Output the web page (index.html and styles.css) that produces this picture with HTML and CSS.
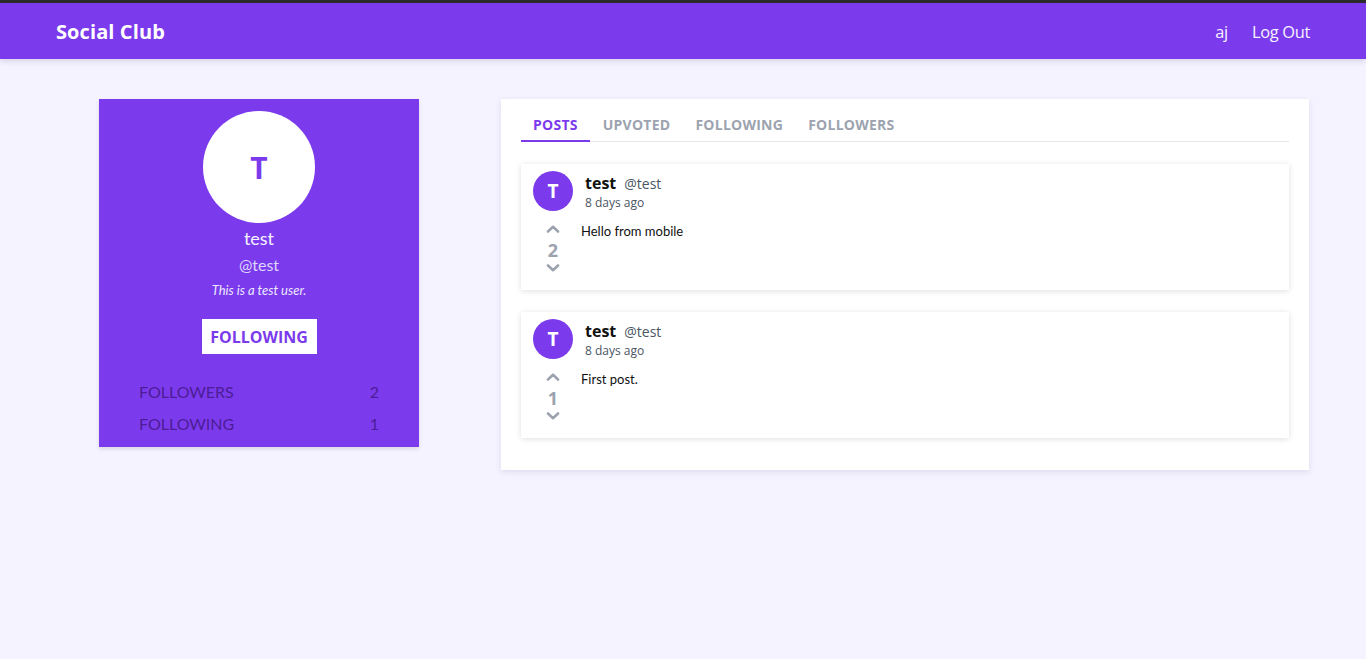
FILE: index.html
```html
<!DOCTYPE html>
<html>
<head>
<meta charset="utf-8">
<link rel="stylesheet" href="styles.css">
</head>
<body>
<header class="topbar">
  <div class="brand">Social Club</div>
  <nav class="nav">
    <a class="nav-link">aj</a>
    <a class="nav-link">Log Out</a>
  </nav>
</header>
<main class="page">
  <aside class="profile">
    <div class="profile-avatar">T</div>
    <div class="profile-name">test</div>
    <div class="profile-handle">@test</div>
    <div class="profile-bio">This is a test user.</div>
    <button class="follow-btn">FOLLOWING</button>
    <div class="stats">
      <div class="stat"><span>FOLLOWERS</span><span>2</span></div>
      <div class="stat"><span>FOLLOWING</span><span>1</span></div>
    </div>
  </aside>
  <section class="feed">
    <div class="tabs">
      <div class="tab active">POSTS</div>
      <div class="tab">UPVOTED</div>
      <div class="tab">FOLLOWING</div>
      <div class="tab">FOLLOWERS</div>
    </div>
    <div class="posts">
      <article class="post">
        <div class="post-head">
          <div class="post-avatar">T</div>
          <div class="post-meta">
            <div class="post-author"><span class="post-name">test</span><span class="post-handle">@test</span></div>
            <div class="post-time">8 days ago</div>
          </div>
        </div>
        <div class="post-body">
          <div class="votes">
            <svg class="chev up" viewBox="0 0 14 8" width="14" height="8"><path d="M2 6.5 L7 1.8 L12 6.5" fill="none" stroke="currentColor" stroke-width="2.6" stroke-linecap="round" stroke-linejoin="round"/></svg>
            <div class="count">2</div>
            <svg class="chev down" viewBox="0 0 14 8" width="14" height="8"><path d="M2 1.5 L7 6.2 L12 1.5" fill="none" stroke="currentColor" stroke-width="2.6" stroke-linecap="round" stroke-linejoin="round"/></svg>
          </div>
          <p class="post-text">Hello from mobile</p>
        </div>
      </article>
      <article class="post">
        <div class="post-head">
          <div class="post-avatar">T</div>
          <div class="post-meta">
            <div class="post-author"><span class="post-name">test</span><span class="post-handle">@test</span></div>
            <div class="post-time">8 days ago</div>
          </div>
        </div>
        <div class="post-body">
          <div class="votes">
            <svg class="chev up" viewBox="0 0 14 8" width="14" height="8"><path d="M2 6.5 L7 1.8 L12 6.5" fill="none" stroke="currentColor" stroke-width="2.6" stroke-linecap="round" stroke-linejoin="round"/></svg>
            <div class="count">1</div>
            <svg class="chev down" viewBox="0 0 14 8" width="14" height="8"><path d="M2 1.5 L7 6.2 L12 1.5" fill="none" stroke="currentColor" stroke-width="2.6" stroke-linecap="round" stroke-linejoin="round"/></svg>
          </div>
          <p class="post-text">First post.</p>
        </div>
      </article>
    </div>
  </section>
</main>
</body>
</html>
```

FILE: styles.css
```css
* { box-sizing: border-box; }
html, body { margin: 0; padding: 0; }
body {
  background: #f5f3ff;
  font-family: "Open Sans", "Noto Sans", sans-serif;
  min-height: 659px;
}
.topbar {
  border-top: 3px solid #2b2b2b;
  height: 59px;
  background: #7c3aed;
  display: flex;
  align-items: center;
  justify-content: space-between;
  padding: 0 56px;
  box-shadow: 0 2px 6px rgba(60, 40, 120, 0.18);
  color: #fff;
}
.brand {
  font-weight: 700;
  font-size: 20px;
  letter-spacing: 0.1px;
}
.nav { display: flex; gap: 24px; }
.nav-link { font-size: 16.4px; color: #f5f3ff; letter-spacing: -0.3px; }
.page {
  display: flex;
  align-items: flex-start;
  padding: 40px 57px 0 99px;
  gap: 82px;
}
.profile {
  width: 320px;
  flex: none;
  background: #7c3aed;
  display: flex;
  flex-direction: column;
  align-items: center;
  padding: 12px 40px 11px;
  box-shadow: 0 2px 4px rgba(0,0,0,0.12);
  font-family: "Lato", "Open Sans", sans-serif;
}
.profile-avatar {
  width: 112px; height: 112px; border-radius: 50%;
  background: #fff; color: #7c3aed;
  display: flex; align-items: center; justify-content: center;
  font-size: 30px; font-weight: 700;
  font-family: "Open Sans", sans-serif;
}
.profile-name { color: #f5f3ff; font-size: 18px; line-height: 24px; margin-top: 3px; }
.profile-handle { color: #ddd6fe; font-size: 16px; line-height: 22px; margin-top: 4px; }
.profile-bio { color: #ede9fe; font-size: 13px; font-style: italic; line-height: 18px; margin-top: 5px; }
.follow-btn {
  margin-top: 20px;
  background: #fff; color: #7c3aed;
  border: none; height: 35px; width: 115px;
  font-family: "Open Sans", sans-serif;
  font-weight: 700; font-size: 16px;
  padding: 0;
}
.stats { width: 100%; margin-top: 26px; display: flex; flex-direction: column; gap: 8px; }
.stat {
  display: flex; justify-content: space-between;
  color: #4c1d95; font-size: 16px; line-height: 24px;
}
.feed {
  flex: 1;
  background: #fff;
  padding: 14px 20px 32px;
  box-shadow: 0 2px 6px rgba(60, 40, 120, 0.12);
}
.tabs {
  display: flex;
  border-bottom: 1px solid #e5e7eb;
}
.tab {
  font-size: 14px; font-weight: 700;
  color: #9ca3af;
  padding: 2px 12px 6px;
  margin-right: 1px;
  border-bottom: 2px solid transparent;
  margin-bottom: -1px;
  letter-spacing: 0.25px;
}
.tab.active { color: #7c3aed; border-bottom-color: #7c3aed; }
.posts { display: flex; flex-direction: column; gap: 22px; margin-top: 22px; }
.post {
  background: #fff;
  padding: 7px 12px 10px;
  height: 126px;
  box-shadow: 0 1px 6px rgba(0,0,0,0.13);
}
.post-head { display: flex; gap: 12px; align-items: flex-start; }
.post-avatar {
  width: 40px; height: 40px; border-radius: 50%;
  background: #7c3aed; color: #fff;
  display: flex; align-items: center; justify-content: center;
  font-weight: 700; font-size: 19px;
}
.post-meta { padding-top: 2px; }
.post-author { display: flex; align-items: baseline; gap: 8px; line-height: 20px; }
.post-name { font-weight: 700; font-size: 16px; color: #111; }
.post-handle { font-size: 14px; color: #4b5563; }
.post-time { font-size: 12px; color: #4b5563; line-height: 17px; }
.post-body { display: flex; gap: 8px; margin-top: 7px; }
.votes {
  width: 40px; display: flex; flex-direction: column; align-items: center;
  color: #9ca3af;
}
.chev { display: block; }
.chev.up { margin-top: 7px; }
.chev.down { margin-top: 1px; }
.count { font-size: 18px; font-weight: 700; line-height: 26px; margin-top: 4px; }
.post-text {
  margin: 5px 0 0;
  font-family: "Lato", sans-serif;
  font-size: 13px; color: #111;
}
```
